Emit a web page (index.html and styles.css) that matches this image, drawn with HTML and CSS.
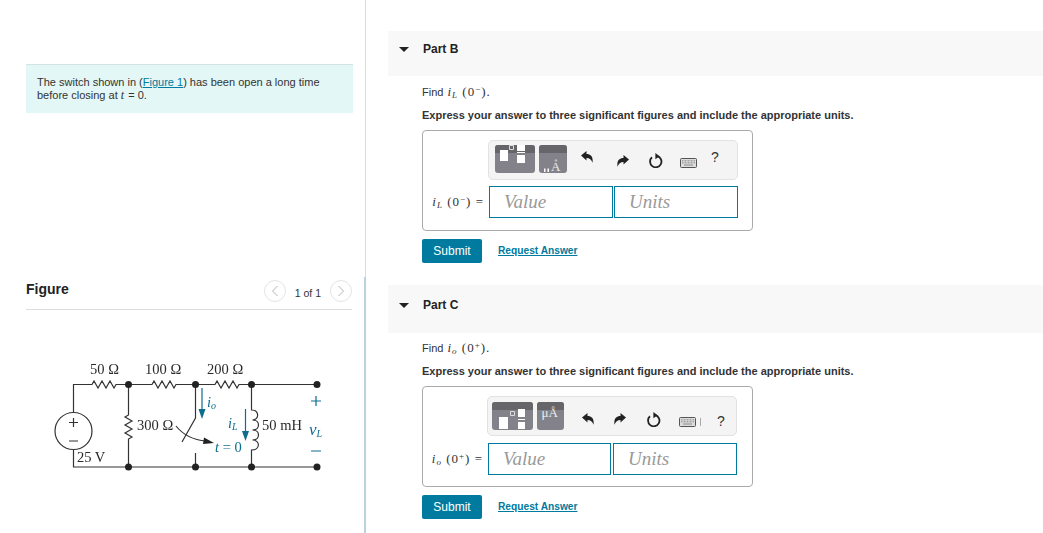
FILE: index.html
```html
<!DOCTYPE html>
<html lang="en">
<head>
    <meta charset="UTF-8">
    <title>Part B and Part C</title>
    <link rel="stylesheet" href="styles.css">
</head>
<body>

    <svg class="defs" width="0" height="0">
        <symbol id="undo" viewBox="0 0 12 12">
            <path d="M0 4.500 5.500 0v3C10 3 12.300 6 11.500 11.800 10.500 8.800 8.500 7 5.500 7v2.500z"/>
        </symbol>
        <symbol id="redo" viewBox="0 0 12 12">
            <path d="M12 4.500 6.500 0v3C2 3-.3 6 .5 11.800 1.500 8.800 3.500 7 6.500 7v2.500z"/>
        </symbol>
        <symbol id="reload" viewBox="0 0 14 15">
            <path d="M8.300 3.100A5.700 5.700 0 1 1 3 4.300" fill="none" stroke="#222" stroke-width="1.800"/>
            <path d="M6.400 0 10.500 3.200 6.400 6.200z"/>
        </symbol>
        <symbol id="keyboard" viewBox="0 0 17 10">
            <rect x=".5" y=".5" width="16" height="9" rx="1" fill="#ddd" stroke="#555"/>
            <path d="M2 2.800h13M2 4.800h13" stroke="#8a8a8a" stroke-dasharray="1 .5"/>
            <path d="M4 7h9" stroke="#8a8a8a"/>
        </symbol>
    </svg>

    <div class="left-col">
        <div class="intro-pane">
            <div class="intro">
                <span class="intro-line">The switch shown in (<a href="#">Figure 1</a>) has been open a long time</span>
                <span class="intro-line">before closing at <i class="var">t</i> = 0.</span>
            </div>
        </div>
        <div class="figure-pane">
            <div class="figure-head">
                <h2>Figure</h2>
                <div class="pager">
                    <span class="page-btn"><svg width="8" height="12" viewBox="0 0 8 12"><path d="M6.500 1 1.500 6l5 5" fill="none" stroke="#b5b5b5"/></svg></span>
                    <span class="page-count">1 of 1</span>
                    <span class="page-btn"><svg width="8" height="12" viewBox="0 0 8 12"><path d="M1.500 1 6.500 6l-5 5" fill="none" stroke="#b5b5b5"/></svg></span>
                </div>
            </div>

            <!-- viewBox uses page coordinates so the circuit is easy to read off -->
            <svg class="circuit" viewBox="40 355 300 130" width="300" height="130">
                <g fill="none" stroke="#333" stroke-width="1.200">
                    <path d="M73.500 412V384.500H92l2 -3.500 4 7 4 -7 4 7 4 -7 4 7 2 -3.500H152l2 -3.500 4 7 4 -7 4 7 4 -7 4 7 2 -3.500H215l2 -3.500 4 7 4 -7 4 7 4 -7 4 7 2 -3.500H317"/>
                    <path d="M73.500 450V467H317"/>
                    <circle cx="73.500" cy="431" r="18.500"/>
                    <path d="M128.500 384V415l-3.500 2 7 4 -7 4 7 4 -7 4 7 4 -3.500 2V467"/>
                    <path d="M195.500 384V418L182 442M195.500 453V467"/>
                    <path d="M251.500 384V410c8 0 8 10 1 10c8 0 8 10 0 10c8 0 8 10 0 10c8 0 8 10 -1 10V467"/>
                    <path d="M176 426C184 436 194 440 206 441"/>
                    <path d="M69 422.500h9M73.500 418v9M69 441h9"/>
                </g>
                <path d="M214 443 204 437.500 203 444z" fill="#222"/>
                <g fill="#222">
                    <circle cx="128.500" cy="384.500" r="3.500"/>
                    <circle cx="195.500" cy="384.500" r="3.500"/>
                    <circle cx="251.500" cy="384.500" r="3.500"/>
                    <circle cx="317" cy="384.500" r="3.500"/>
                    <circle cx="128.500" cy="467" r="3.500"/>
                    <circle cx="195.500" cy="467" r="3.500"/>
                    <circle cx="251.500" cy="467" r="3.500"/>
                    <circle cx="317" cy="467" r="3.500"/>
                </g>
                <g fill="none" stroke="#0d6d8f" stroke-width="1.200">
                    <path d="M202 388V410M245.500 409V432M311 401h10M316 396v10M311 451h10"/>
                </g>
                <path d="M198.500 409h7l-3.500 10zM242 431h7l-3.500 10z" fill="#0d6d8f"/>
                <g class="circuit-text">
                    <text x="90" y="374">50 Ω</text>
                    <text x="145" y="374">100 Ω</text>
                    <text x="207" y="374">200 Ω</text>
                    <text x="137" y="430">300 Ω</text>
                    <text x="77" y="462">25 V</text>
                    <text x="262" y="430">50 mH</text>
                </g>
                <g class="circuit-text teal">
                    <text x="207" y="407"><tspan class="it">i</tspan><tspan class="it small" dy="2">o</tspan></text>
                    <text x="228" y="428"><tspan class="it">i</tspan><tspan class="it small" dy="2">L</tspan></text>
                    <text x="215" y="452"><tspan class="it">t</tspan> = 0</text>
                    <text x="309" y="435"><tspan class="it big">v</tspan><tspan class="it small" dy="2">L</tspan></text>
                </g>
            </svg>
        </div>
    </div>

    <div class="right-col">
        <!-- Part B -->
        <div class="part part-b">
            <div class="part-head">
                <span class="caret"></span>
                <span>Part B</span>
            </div>
            <p class="find">Find <span class="math"><i>i<sub>L</sub></i> (0<sup>−</sup>).</span></p>
            <p class="express">Express your answer to three significant figures and include the appropriate units.</p>
            <div class="answer-box">
                <div class="tools">
                    <svg class="tpl-btn" viewBox="0 0 40 28" width="40" height="28">
                        <rect width="40" height="28" rx="3" fill="#83828a"/>
                        <path d="M0 8V3a3 3 0 0 1 3-3H37a3 3 0 0 1 3 3V8z" fill="#66656a"/>
                        <path d="M5 5h8v11H5zM22 0h8v6H22zM22 10h8v8H22z" fill="#fff"/>
                        <path d="M14.500 .5h4v4h-4z" fill="none" stroke="#ddd"/>
                        <path d="M22 7.500h8" stroke="#fff"/>
                    </svg>
                    <svg class="sym-btn" viewBox="0 0 28 28" width="28" height="28">
                        <rect width="28" height="28" rx="3" fill="#83828a"/>
                        <path d="M0 8V3a3 3 0 0 1 3-3H25a3 3 0 0 1 3 3V8z" fill="#66656a"/>
                        <path d="M5 23.500h1.500V27H5zM8.500 23.500H10V27H8.500z" fill="#fff"/>
                        <circle cx="17" cy="15.500" r="1.300" fill="#bbb"/>
                        <text x="12" y="25.500" class="sym-text">A</text>
                    </svg>
                    <svg class="tool undo"><use href="#undo"/></svg>
                    <svg class="tool redo"><use href="#redo"/></svg>
                    <svg class="tool reload"><use href="#reload"/></svg>
                    <svg class="tool keyboard"><use href="#keyboard"/></svg>
                    <span class="help">?</span>
                </div>
                <div class="answer-row">
                    <span class="answer-label"><i>i<sub>L</sub></i> (0<sup>−</sup>) =</span>
                    <input class="field" type="text" placeholder="Value">
                    <input class="field" type="text" placeholder="Units">
                </div>
            </div>
            <div class="actions">
                <button type="button">Submit</button>
                <a class="request" href="#">Request Answer</a>
            </div>
        </div>

        <!-- Part C -->
        <div class="part part-c">
            <div class="part-head">
                <span class="caret"></span>
                <span>Part C</span>
            </div>
            <p class="find">Find <span class="math"><i>i<sub>o</sub></i> (0<sup>+</sup>).</span></p>
            <p class="express">Express your answer to three significant figures and include the appropriate units.</p>
            <div class="answer-box">
                <div class="tools">
                    <svg class="tpl-btn" viewBox="0 0 41 28" width="41" height="28">
                        <rect width="41" height="28" rx="3" fill="#83828a"/>
                        <path d="M0 8V3a3 3 0 0 1 3-3H38a3 3 0 0 1 3 3V8z" fill="#66656a"/>
                        <path d="M7 15h9v12H7zM26 7h7v8H26zM26 20h7v7H26z" fill="#fff"/>
                        <path d="M18.500 9.500h4v4h-4z" fill="none" stroke="#ddd"/>
                        <path d="M26 17.500h7" stroke="#fff"/>
                    </svg>
                    <svg class="sym-btn" viewBox="0 0 27 28" width="27" height="28">
                        <rect width="27" height="28" rx="3" fill="#83828a"/>
                        <path d="M0 8V3a3 3 0 0 1 3-3H24a3 3 0 0 1 3 3V8z" fill="#66656a"/>
                        <text x="4.500" y="15" class="sym-text">μÅ</text>
                    </svg>
                    <svg class="tool undo"><use href="#undo"/></svg>
                    <svg class="tool redo"><use href="#redo"/></svg>
                    <svg class="tool reload"><use href="#reload"/></svg>
                    <svg class="tool keyboard"><use href="#keyboard"/></svg>
                    <span class="tool-bar"></span>
                    <span class="help">?</span>
                </div>
                <div class="answer-row">
                    <span class="answer-label"><i>i<sub>o</sub></i> (0<sup>+</sup>) =</span>
                    <input class="field" type="text" placeholder="Value">
                    <input class="field" type="text" placeholder="Units">
                </div>
            </div>
            <div class="actions">
                <button type="button">Submit</button>
                <a class="request" href="#">Request Answer</a>
            </div>
        </div>
    </div>

</body>
</html>
```

FILE: styles.css
```css
body {
    font-family: "Liberation Sans", Arial, sans-serif;
    font-size: 11px;
    color: #333;
    background-color: white;
    margin: 0;
    height: 533px;
    overflow: hidden;
    display: flex;
}

.defs {
    display: none;
}

a {
    color: #007a9e;
}

/* Left column: intro text and figure */
.left-col {
    width: 366px;
    flex: none;
}

.intro-pane {
    height: 277px;
    box-sizing: border-box;
    width: 366px;
    padding: 64px 12px 0 26px;
    border-right: 1px solid #dcdcdc;
}

.intro {
    background-color: #e3f7f6;
    border-top: 1px solid #d5e3e3;
    box-sizing: border-box;
    height: 49px;
    width: 327px;
    padding: 11px 11px 0;
}

.intro-line {
    display: block;
    height: 13px;
    line-height: 13px;
}

.intro a {
    text-decoration-thickness: 1px;
}

.var {
    font-family: "Liberation Serif", serif;
    font-size: 12px;
    line-height: 0;
    margin-right: 1px;
}

.figure-pane {
    height: 256px;
    box-sizing: border-box;
    width: 366px;
    padding: 0 12px 0 26px;
    border-right: 2px solid #b9d2e2;
}

.figure-head {
    display: flex;
    justify-content: space-between;
    align-items: center;
    height: 32px;
    border-bottom: 1px solid #dcdfe2;
    width: 326px;
}

.figure-head h2 {
    margin: 0 0 8px;
    font-size: 14px;
    color: #222;
}

.pager {
    display: flex;
    align-items: center;
    gap: 9px;
    margin: 0 0 4px;
    font-size: 10.500px;
}

.page-count {
    padding-top: 4px;
}

.page-btn {
    width: 22px;
    height: 22px;
    box-sizing: border-box;
    border: 1px solid #e4e4e4;
    border-radius: 50%;
    display: flex;
    align-items: center;
    justify-content: center;
}

.circuit {
    display: block;
    margin: 45px 0 0 14px;
    filter: blur(0.3px);
}

.circuit-text text {
    font-family: "Liberation Serif", serif;
    font-size: 14.500px;
    fill: #2a2a2a;
}

.circuit-text.teal text {
    fill: #0d6d8f;
}

.circuit-text .it {
    font-style: italic;
}

.circuit-text .small {
    font-size: 10px;
}

.circuit-text .big {
    font-size: 17px;
}

/* Right column: question parts */
.right-col {
    flex: 1;
    padding-left: 22px;
}

.part-b {
    padding-top: 31px;
}

.part-c {
    padding-top: 22px;
}

.part-head {
    background-color: #f8f8f8;
    display: flex;
    font-weight: bold;
    font-size: 12px;
    color: #222;
    padding: 11px 0 0 11px;
    box-sizing: border-box;
    gap: 14px;
    height: 45px;
}

.part-c .part-head {
    height: 48px;
    padding-top: 13px;
}

.caret {
    width: 0;
    height: 0;
    margin-top: 5px;
    border-left: 5px solid transparent;
    border-right: 5px solid transparent;
    border-top: 5px solid #222;
}

.find {
    margin: 8px 0 0 34px;
    height: 16px;
    line-height: 16px;
}

.part-c .find {
    margin-top: 7px;
}

.math {
    font-family: "Liberation Serif", serif;
    font-size: 13px;
    margin-left: 1px;
    letter-spacing: 1px;
}

sub, sup {
    font-size: 9px;
    line-height: 0;
}

sub {
    vertical-align: -2px;
}

sup {
    vertical-align: 4px;
}

.express {
    margin: 9px 0 0 34px;
    font-weight: bold;
    line-height: 13px;
    color: #333;
}

.answer-box {
    margin: 8px 0 0 34px;
    width: 331px;
    height: 101px;
    box-sizing: border-box;
    border: 1px solid #aaa;
    border-radius: 4px;
    padding: 9px 0 0 65px;
}

.part-c .answer-box {
    padding-left: 64px;
}

.tools {
    width: 250px;
    height: 40px;
    box-sizing: border-box;
    background-color: #f4f4f4;
    border: 1px solid #e2e2e2;
    border-radius: 5px;
    display: flex;
    align-items: flex-start;
    padding: 4px 0 0 6px;
}

.part-c .tools {
    padding-top: 5px;
    padding-left: 4px;
}

.sym-btn {
    margin-left: 4px;
}

.sym-text {
    font-family: "Liberation Serif", serif;
    font-size: 13px;
    fill: #eee;
}

.tool {
    display: block;
    fill: #222;
}

.undo, .redo {
    width: 12px;
    height: 12px;
}

.part-b .undo { margin: 6px 0 0 14px; }
.part-b .redo { margin: 10px 0 0 24px; }
.part-b .reload { margin: 8px 0 0 20px; }
.part-b .keyboard { margin: 13px 0 0 17px; }

.part-c .undo { margin: 11px 0 0 18px; }
.part-c .redo { margin: 11px 0 0 20px; }
.part-c .reload { margin: 10px 0 0 21px; }
.part-c .keyboard { margin: 15px 0 0 18px; }

.reload {
    width: 14px;
    height: 15px;
}

.keyboard {
    width: 17px;
    height: 10px;
}

.tool-bar {
    width: 1px;
    height: 8px;
    margin: 16px 0 0 4px;
    background-color: #aaa;
}

.help {
    font-size: 14px;
    line-height: 14px;
    color: #333;
}

.part-b .help { margin: 5px 0 0 14px; }
.part-c .help { margin: 12px 0 0 16px; }

.answer-row {
    display: flex;
    align-items: center;
    margin: 6px 0 0 1px;
    position: relative;
}

.part-c .answer-row {
    margin-top: 7px;
}

.answer-label {
    position: absolute;
    right: 100%;
    margin-right: 5px;
    white-space: nowrap;
    font-family: "Liberation Serif", serif;
    font-size: 13px;
    letter-spacing: 1px;
}

.field {
    width: 124px;
    height: 32px;
    box-sizing: border-box;
    border: 1px solid #007a9e;
    border-radius: 0;
    padding: 0 0 0 14px;
    margin: 0 1px 0 0;
    font-family: "Liberation Serif", serif;
    font-style: italic;
    font-size: 19px;
}

.field::placeholder {
    color: #999;
    opacity: 1;
}

.part-c .field {
    width: 123px;
}

.part-c .field + .field {
    width: 124px;
    margin-left: 1px;
}

.actions {
    display: flex;
    align-items: center;
    gap: 16px;
    margin: 8px 0 0 34px;
}

button {
    width: 60px;
    height: 24px;
    padding: 0;
    background-color: #007a9e;
    color: white;
    border: none;
    border-radius: 2px;
    font-family: "Liberation Sans", Arial, sans-serif;
    font-size: 12px;
}

.request {
    font-weight: bold;
    font-size: 10.200px;
    margin-bottom: 2px;
}
```
